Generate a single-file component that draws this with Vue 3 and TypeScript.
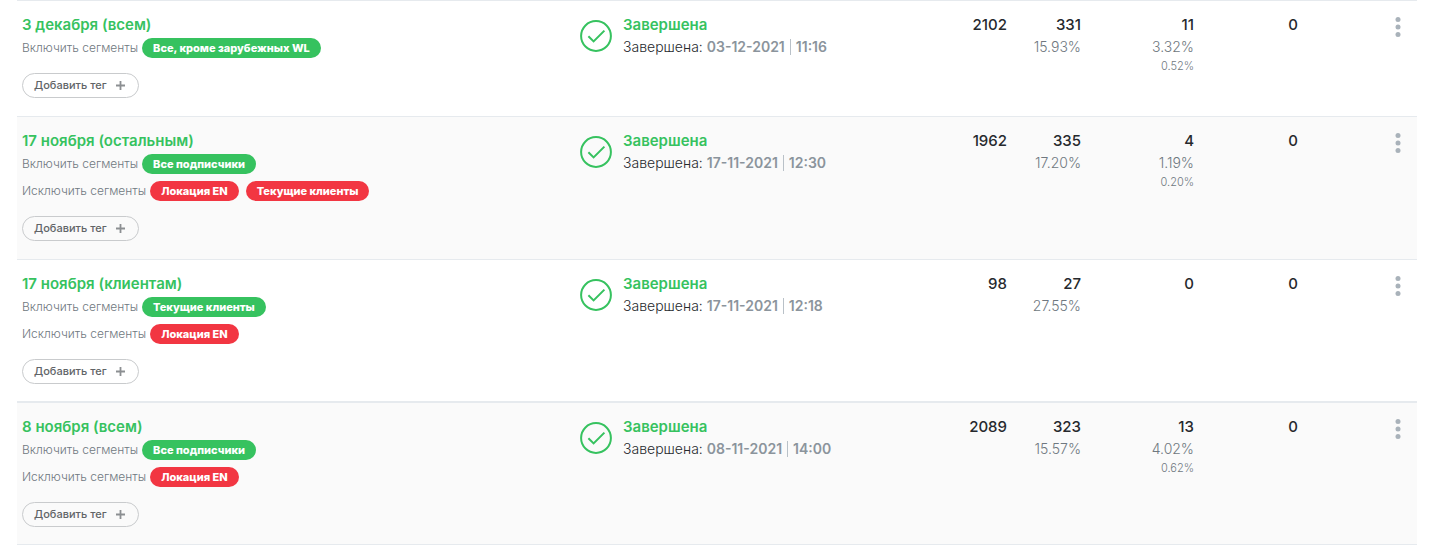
<script setup lang="ts">
interface Campaign {
  title: string
  include: string[]
  exclude: string[]
  date: string
  time: string
  sent: number
  opened: number
  openRate: string
  clicked: number
  clickRate?: string
  clickTotal?: string
  unsubscribed: number
}

const campaigns: Campaign[] = [
  {
    title: '3 декабря (всем)', include: ['Все, кроме зарубежных WL'], exclude: [],
    date: '03-12-2021', time: '11:16', sent: 2102, opened: 331, openRate: '15.93%',
    clicked: 11, clickRate: '3.32%', clickTotal: '0.52%', unsubscribed: 0,
  },
  {
    title: '17 ноября (остальным)', include: ['Все подписчики'], exclude: ['Локация EN', 'Текущие клиенты'],
    date: '17-11-2021', time: '12:30', sent: 1962, opened: 335, openRate: '17.20%',
    clicked: 4, clickRate: '1.19%', clickTotal: '0.20%', unsubscribed: 0,
  },
  {
    title: '17 ноября (клиентам)', include: ['Текущие клиенты'], exclude: ['Локация EN'],
    date: '17-11-2021', time: '12:18', sent: 98, opened: 27, openRate: '27.55%',
    clicked: 0, unsubscribed: 0,
  },
  {
    title: '8 ноября (всем)', include: ['Все подписчики'], exclude: ['Локация EN'],
    date: '08-11-2021', time: '14:00', sent: 2089, opened: 323, openRate: '15.57%',
    clicked: 13, clickRate: '4.02%', clickTotal: '0.62%', unsubscribed: 0,
  },
]
</script>

<template>
  <main class="page">
    <table class="campaigns">
      <colgroup>
        <col class="col-name">
        <col class="col-status">
        <col class="col-sent">
        <col class="col-opened">
        <col class="col-clicked">
        <col class="col-unsubscribed">
        <col class="col-actions">
      </colgroup>
      <tbody>
        <tr v-for="item in campaigns" :key="item.title">
          <td>
            <a class="title" href="#">{{ item.title }}</a>
            <div class="segments">
              <span>Включить сегменты</span>
              <span v-for="tag in item.include" :key="tag" class="pill include">{{ tag }}</span>
            </div>
            <div v-if="item.exclude.length" class="segments">
              <span>Исключить сегменты</span>
              <span v-for="tag in item.exclude" :key="tag" class="pill exclude">{{ tag }}</span>
            </div>
            <button type="button" class="add-tag">
              Добавить тег
              <svg width="9" height="9" viewBox="0 0 9 9" aria-hidden="true">
                <path d="M4.5 0v9M0 4.5h9" fill="none" stroke="#8c8f92" stroke-width="1.8" />
              </svg>
            </button>
          </td>
          <td>
            <div class="status">
              <svg class="check" width="32" height="32" viewBox="0 0 32 32" aria-hidden="true">
                <g fill="none" stroke="#36c25f" stroke-width="2">
                  <circle cx="16" cy="16" r="14.9" />
                  <path d="M8.4 16.2l5.2 5.2L24.4 10.6" />
                </g>
              </svg>
              <div>
                <div class="state">Завершена</div>
                <div class="finished">
                  Завершена: <time>{{ item.date }}<i class="bar" />{{ item.time }}</time>
                </div>
              </div>
            </div>
          </td>
          <td class="number"><div class="count">{{ item.sent }}</div></td>
          <td class="number">
            <div class="count">{{ item.opened }}</div>
            <div class="rate">{{ item.openRate }}</div>
          </td>
          <td class="number">
            <div class="count">{{ item.clicked }}</div>
            <div v-if="item.clickRate" class="rate">{{ item.clickRate }}</div>
            <div v-if="item.clickTotal" class="total">{{ item.clickTotal }}</div>
          </td>
          <td class="number"><div class="count">{{ item.unsubscribed }}</div></td>
          <td class="actions">
            <button type="button" class="menu" aria-label="Действия">
              <svg width="6" height="20" viewBox="0 0 6 20" aria-hidden="true">
                <g fill="#a9b2ba">
                  <circle cx="3" cy="2.5" r="2.5" />
                  <circle cx="3" cy="10" r="2.5" />
                  <circle cx="3" cy="17.5" r="2.5" />
                </g>
              </svg>
            </button>
          </td>
        </tr>
      </tbody>
    </table>
  </main>
</template>

<style>
body {
  margin: 0;
  background: #fff;
}
</style>

<style scoped>
.page {
  padding: 0 18px 0 17px;
  font-family: Inter, "Liberation Sans", sans-serif;
  color: #26292d;
}

.campaigns {
  width: 100%;
  table-layout: fixed;
  border-collapse: separate;
  border-spacing: 0;
}

.col-status { width: 350px; }
.col-sent { width: 87px; }
.col-opened { width: 74px; }
.col-clicked { width: 113px; }
.col-unsubscribed { width: 104px; }
.col-actions { width: 114px; }

td {
  padding: 14px 5px 18px;
  border-top: 1px solid #e6eaee;
  vertical-align: top;
}

tr:nth-child(even) td {
  background: #fafafa;
}

tr:nth-child(3) td {
  padding-bottom: 17px;
}

tr:last-child td {
  padding-bottom: 17px;
  border-top-width: 2px;
  border-bottom: 1px solid #e6eaee;
}

.title {
  display: block;
  font-size: 15px;
  line-height: 20px;
  font-weight: 600;
  color: #36c25f;
  text-decoration: none;
}

.segments {
  display: flex;
  align-items: center;
  height: 20px;
  margin: 3px 0 7px;
  font-size: 12px;
  line-height: 20px;
  font-weight: 300;
  color: #6f7880;
}

.segments + .segments {
  margin-top: 0;
}

.pill {
  margin-left: 4px;
  padding: 0 11px;
  border-radius: 10px;
  font-size: 11px;
  font-weight: 800;
  color: #fff;
}

.pill + .pill {
  margin-left: 7px;
}

.include { background: #36c25f; }
.exclude { background: #f23642; }

.add-tag {
  display: flex;
  align-items: center;
  gap: 9px;
  height: 25px;
  margin-top: 15px;
  padding: 0 13px 0 11px;
  border: 1px solid #c9cbcd;
  border-radius: 13px;
  background: transparent;
  font: 500 11px/23px Inter, "Liberation Sans", sans-serif;
  color: #616467;
}

.status {
  display: flex;
  gap: 11px;
}

.check {
  margin-top: 5px;
}

.state {
  font-size: 15px;
  line-height: 20px;
  font-weight: 600;
  color: #36c25f;
}

.finished {
  margin-top: 2px;
  font-size: 14px;
  line-height: 20px;
  font-weight: 300;
}

time {
  font-weight: 600;
  color: #8b949c;
}

.bar {
  display: inline-block;
  width: 1px;
  height: 16px;
  margin: 0 5px;
  background: #b9c1c8;
  vertical-align: -3px;
}

.number {
  text-align: right;
}

.count {
  font-size: 15px;
  line-height: 20px;
  font-weight: 500;
}

.rate {
  margin-top: 2px;
  font-size: 14px;
  line-height: 20px;
  font-weight: 300;
  color: #6f7880;
}

.total {
  font-size: 11px;
  line-height: 18px;
  font-weight: 300;
  color: #6f7880;
}

.actions {
  padding-right: 16px;
  text-align: right;
}

.menu {
  margin-top: 2px;
  padding: 0;
  border: 0;
  background: none;
}

.menu svg {
  display: block;
}
</style>
